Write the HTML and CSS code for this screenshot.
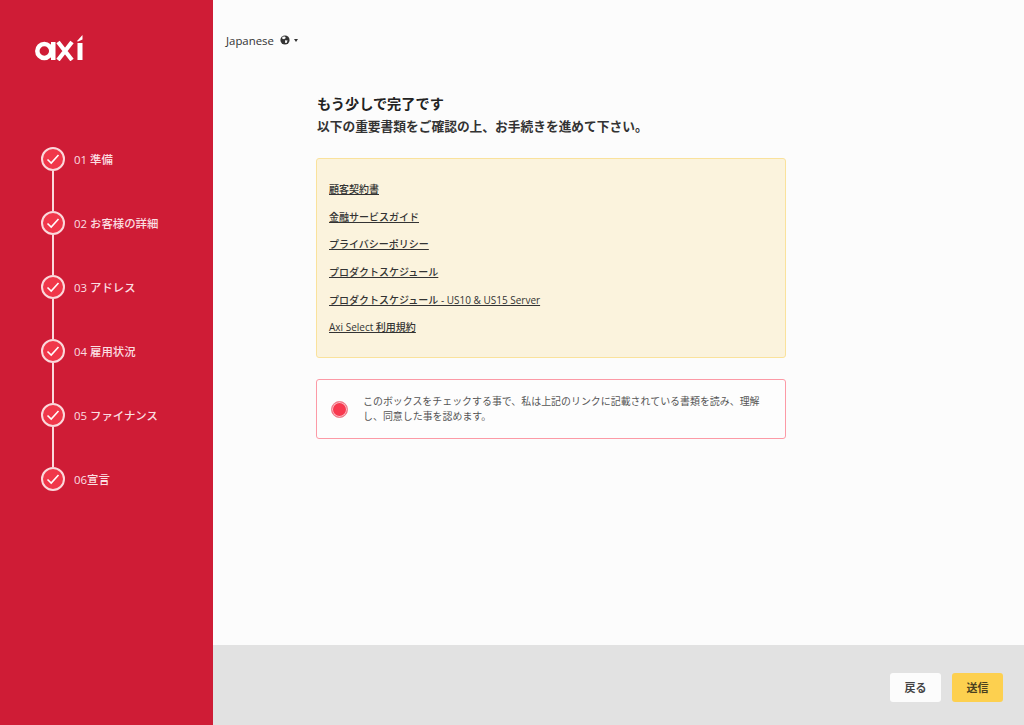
FILE: index.html
```html
<!DOCTYPE html>
<html lang="ja">
	<head>
		<meta charset="UTF-8" />
		<meta name="viewport" content="width=device-width, initial-scale=1.0" />
		<title>Axi</title>
		<link rel="stylesheet" href="styles.css">
	</head>
	<body>
		<div class="layout">
			<aside class="sidebar">
				<svg class="logo" width="50" height="26" viewBox="0 0 50 26">
					<circle cx="9.3" cy="16" r="7" fill="none" stroke="#fff" stroke-width="4.5" />
					<rect x="16" y="7" width="4.5" height="18" fill="#fff" />
					<path d="M23 7 L37 25 M37 7 L23 25" fill="none" stroke="#fff" stroke-width="4.2" />
					<rect x="42.5" y="8" width="5" height="17" fill="#fff" />
					<path d="M42.5 5.5 L47.5 0 L47.5 4.5 L42.5 6.8 Z" fill="#fff" />
				</svg>
				<ol class="steps">
					<li class="step">
						<div class="track">
							<span class="tick"><svg width="14" height="12" viewBox="0 0 14 12"><path d="M1.5 6.5 L5.2 10 L12.5 2" fill="none" stroke="#fff" stroke-width="1.6" /></svg></span>
							<span class="line"></span>
						</div>
						<span class="step-name">01 準備</span>
					</li>
					<li class="step">
						<div class="track">
							<span class="tick"><svg width="14" height="12" viewBox="0 0 14 12"><path d="M1.5 6.5 L5.2 10 L12.5 2" fill="none" stroke="#fff" stroke-width="1.6" /></svg></span>
							<span class="line"></span>
						</div>
						<span class="step-name">02 お客様の詳細</span>
					</li>
					<li class="step">
						<div class="track">
							<span class="tick"><svg width="14" height="12" viewBox="0 0 14 12"><path d="M1.5 6.5 L5.2 10 L12.5 2" fill="none" stroke="#fff" stroke-width="1.6" /></svg></span>
							<span class="line"></span>
						</div>
						<span class="step-name">03 アドレス</span>
					</li>
					<li class="step">
						<div class="track">
							<span class="tick"><svg width="14" height="12" viewBox="0 0 14 12"><path d="M1.5 6.5 L5.2 10 L12.5 2" fill="none" stroke="#fff" stroke-width="1.6" /></svg></span>
							<span class="line"></span>
						</div>
						<span class="step-name">04 雇用状況</span>
					</li>
					<li class="step">
						<div class="track">
							<span class="tick"><svg width="14" height="12" viewBox="0 0 14 12"><path d="M1.5 6.5 L5.2 10 L12.5 2" fill="none" stroke="#fff" stroke-width="1.6" /></svg></span>
							<span class="line"></span>
						</div>
						<span class="step-name">05 ファイナンス</span>
					</li>
					<li class="step">
						<div class="track">
							<span class="tick"><svg width="14" height="12" viewBox="0 0 14 12"><path d="M1.5 6.5 L5.2 10 L12.5 2" fill="none" stroke="#fff" stroke-width="1.6" /></svg></span>
						</div>
						<span class="step-name">06宣言</span>
					</li>
				</ol>
			</aside>
			<div class="main">
				<div class="page">
					<div class="lang">
						<span>Japanese</span>
						<svg class="globe" width="10" height="10" viewBox="0 0 10 10">
							<circle cx="5" cy="5" r="4.6" fill="#333" />
							<path d="M2.5 1.8 L5 1.5 L5.8 3 L4 4.2 L2 3.4 Z M5 5.2 L7.6 5.4 L6.6 8 L5.2 8 Z" fill="#fcfcfc" />
						</svg>
						<span class="caret"></span>
					</div>
					<div class="content">
						<h1>もう少しで完了です</h1>
						<h2>以下の重要書類をご確認の上、お手続きを進めて下さい。</h2>
						<div class="docs">
							<a href="#">顧客契約書</a>
							<a href="#">金融サービスガイド</a>
							<a href="#">プライバシーポリシー</a>
							<a href="#">プロダクトスケジュール</a>
							<a href="#">プロダクトスケジュール - US10 &amp; US15 Server</a>
							<a href="#">Axi Select 利用規約</a>
						</div>
						<div class="agree">
							<span class="radio"></span>
							<p>このボックスをチェックする事で、私は上記のリンクに記載されている書類を読み、理解し、同意した事を認めます。</p>
						</div>
					</div>
				</div>
				<footer class="footer">
					<button type="button" class="btn">戻る</button>
					<button type="button" class="btn btn-send">送信</button>
				</footer>
			</div>
		</div>
	</body>
</html>
```

FILE: styles.css
```css
* {
	box-sizing: border-box;
}
body {
	margin: 0;
	padding: 0;
	font-family: "Open Sans", "Noto Sans CJK JP", sans-serif;
	color: #333;
}
.layout {
	display: flex;
	width: 100vw;
	height: 100vh;
}
.sidebar {
	width: 213px;
	flex-shrink: 0;
	background-color: #cf1c36;
	padding: 35px 0 0 35px;
}
.logo {
	display: block;
}
.steps {
	list-style: none;
	margin: 86px 0 0;
	padding: 0 0 0 6px;
}
.step {
	display: flex;
	height: 64px;
}
.track {
	display: flex;
	flex-direction: column;
	align-items: center;
	width: 24px;
}
.tick {
	display: flex;
	align-items: center;
	justify-content: center;
	flex-shrink: 0;
	width: 24px;
	height: 24px;
	border: 2px solid #fbd9dc;
	border-radius: 50%;
	background-color: #f0374a;
}
.line {
	width: 2px;
	height: 40px;
	background-color: #fbd9dc;
}
.step-name {
	margin-left: 9px;
	font-size: 11.4px;
	font-weight: 500;
	line-height: 26px;
	color: #fbdfe2;
}
.main {
	flex: 1;
	display: flex;
	flex-direction: column;
	background-color: #fcfcfc;
}
.page {
	flex: 1;
}
.lang {
	display: flex;
	align-items: center;
	height: 16px;
	margin: 32px 0 0 13px;
	font-size: 11.4px;
	color: #333;
}
.globe {
	margin-left: 6px;
}
.caret {
	width: 0;
	height: 0;
	margin-left: 4px;
	border-left: 2.5px solid transparent;
	border-right: 2.5px solid transparent;
	border-top: 3px solid #333;
}
.content {
	width: 470px;
	margin: 46px 0 0 103px;
}
h1 {
	margin: 0;
	padding-left: 1px;
	font-size: 14.2px;
	font-weight: 700;
	line-height: 20px;
	color: #222;
}
h2 {
	margin: 2px 0 0;
	padding-left: 1px;
	font-size: 12.73px;
	font-weight: 700;
	line-height: 20px;
	color: #333;
}
.docs {
	display: flex;
	flex-direction: column;
	align-items: flex-start;
	gap: 11.7px;
	height: 200px;
	margin-top: 22px;
	padding: 22px 12px 0;
	background-color: #fbf3dd;
	border: 1px solid #fae29c;
	border-radius: 3px;
}
.docs a {
	font-size: 10px;
	font-weight: 500;
	line-height: 16px;
	color: #333;
}
.agree {
	display: flex;
	align-items: center;
	height: 60px;
	margin-top: 21px;
	padding: 0 11px 0 14px;
	background-color: #fdfdfd;
	border: 1.5px solid #fc9aa6;
	border-radius: 3px;
}
.radio {
	flex-shrink: 0;
	width: 17px;
	height: 17px;
	border: 1px solid #ef8592;
	border-radius: 50%;
	background-color: #f8394f;
	box-shadow: inset 0 0 0 1px #f9c0c8;
}
.agree p {
	margin: 0 0 0 15px;
	font-size: 9.95px;
	line-height: 15px;
	color: #555;
}
.footer {
	display: flex;
	justify-content: flex-end;
	align-items: center;
	gap: 11px;
	height: 80px;
	padding: 4px 21px 0 0;
	background-color: #e2e2e2;
}
.btn {
	width: 51px;
	height: 29px;
	padding: 0;
	font-family: inherit;
	font-size: 11px;
	font-weight: 700;
	color: #444;
	background-color: #fcfcfc;
	border: 0;
	border-radius: 3px;
}
.btn-send {
	background-color: #fdd04f;
	color: #4a4020;
}
```
